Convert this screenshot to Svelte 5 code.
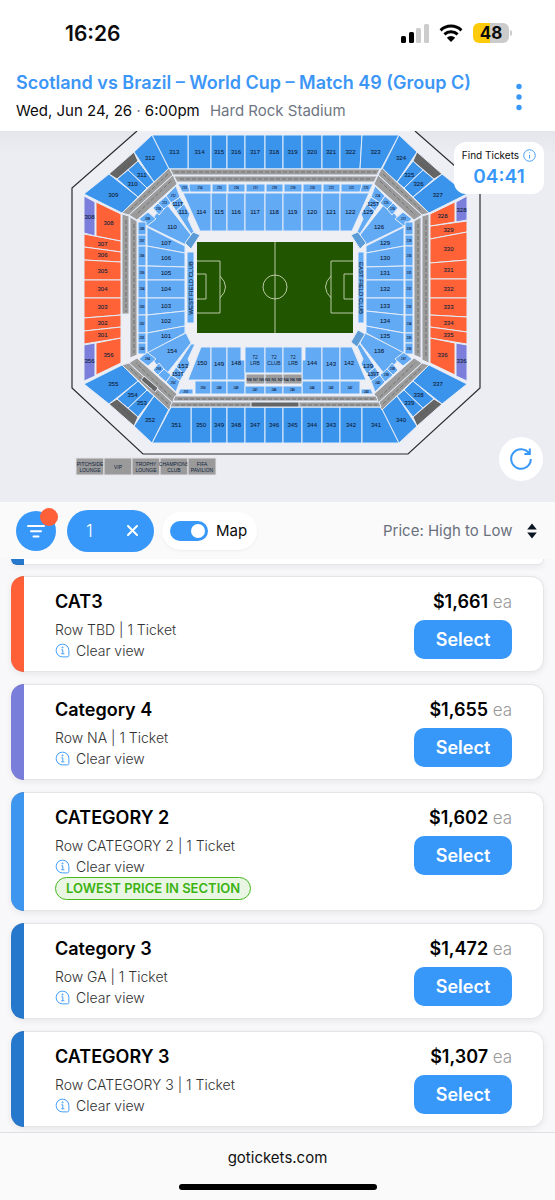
<script lang="ts">
	type Section = { label: string; pts: number[]; kind: string; size?: number; at?: number[] };

	let showMap = $state(true);
	let quantity = $state(1);

	const listings = [
		{ section: 'CAT3', row: 'TBD', price: '$1,661', tone: 'orange', lowest: false },
		{ section: 'Category 4', row: 'NA', price: '$1,655', tone: 'violet', lowest: false },
		{ section: 'CATEGORY 2', row: 'CATEGORY 2', price: '$1,602', tone: 'blue', lowest: true },
		{ section: 'Category 3', row: 'GA', price: '$1,472', tone: 'navy', lowest: false },
		{ section: 'CATEGORY 3', row: 'CATEGORY 3', price: '$1,307', tone: 'navy', lowest: false }
	];

	const sections: Section[] = [];

	function add(kind: string, label: string, pts: number[], size = 6, at?: number[]) {
		sections.push({ kind, label: String(label), pts, size, at });
	}

	// straight runs of sections along the two long sides
	const cols = [[188, 211], [211, 227], [227, 245], [245, 265], [265, 283], [283, 302], [302, 322], [322, 340], [340, 362]];
	cols.forEach(([a, b], i) => {
		add('upper', `${314 + i}`, [a, 135, b, 135, i === 8 ? 360 : b, 169, a, 169]);
		add('lower', `${214 + i}`, [a + 1, 184, b, 184, b, 192, a + 1, 192], 3);
		if (i > 0 && i < 8) add('lower', `${114 + i}`, [a, 193, b, 193, b, 231, a, 231]);
		add('upper', `${350 - i}`, [i === 0 ? 191 : a, 407, b, 407, b, 443, i === 0 ? 191 : a, 443]);
	});
	add('upper', '313', [152, 135, 188, 135, 188, 169, 169, 169]);
	add('upper', '323', [362, 135, 399, 135, 381, 169, 360, 169]);
	add('lower', '213', [178, 184, 188, 184, 190, 192, 182, 192], 3);
	add('lower', '223', [362, 184, 373, 184, 369, 192, 360, 192], 3);
	add('lower', '114', [183, 193, 211, 193, 211, 231, 200, 231]);
	add('lower', '122', [340, 193, 369, 193, 352, 231, 340, 231]);
	add('upper', '351', [171, 407, 191, 407, 191, 443, 152, 443]);
	add('upper', '341', [362, 407, 381, 407, 399, 443, 362, 443]);

	add('lower', '150', [201, 347, 211, 347, 211, 380, 188, 380], 6, [202, 363]);
	add('lower', '149', [211, 347, 227, 347, 227, 380, 211, 380]);
	add('lower', '148', [227, 347, 241, 347, 241, 360, 245, 360, 245, 380, 227, 380], 6, [236, 363]);
	add('lower', '144', [305, 347, 322, 347, 322, 380, 302, 380, 302, 360, 305, 360], 6, [312, 363]);
	add('lower', '143', [322, 347, 340, 347, 340, 380, 322, 380]);
	add('lower', '142', [340, 347, 352, 347, 366, 380, 340, 380], 6, [349, 363]);
	[[195, 211, 250], [211, 227, 249], [227, 245, 248], [302, 322, 244], [322, 340, 243], [340, 360, 242]].forEach(([a, b, n]) =>
		add('lower', `${n}`, [a, 381, b, 381, b, 394, a, 394], 3)
	);
	[[245, 265, 247], [265, 283, 246], [283, 302, 245]].forEach(([a, b, n]) => {
		add('lower', `${n}`, [a, 386, b, 386, b, 394, a, 394], 3);
		add('lower', '', [a, 347, b, 347, b, 373, a, 373]);
	});
	add('lower', '251', [180, 389, 193, 389, 193, 394, 178, 394], 3);
	add('lower', '241', [361, 389, 371, 389, 373, 394, 361, 394], 3);

	// the four corners share one shape
	const corners = [
		{ fx: false, fy: false, n: ['312', '311', '310', '309', '110', '111', '111T', '212', '211', '210', '209'] },
		{ fx: true, fy: false, n: ['324', '325', '326', '327', '126', '125', '125T', '224', '225', '226', '227'] },
		{ fx: false, fy: true, n: ['352', '353', '354', '355', '154', '153', '153T', '252', '', '253', '254'] },
		{ fx: true, fy: true, n: ['340', '339', '338', '337', '138', '139', '139T', '240', '239', '238', '237'] }
	];
	const cornerShapes: [string, number[], number][] = [
		['upper', [152, 135, 169, 169, 154, 182, 134, 152], 6],
		['upper', [128, 170, 138, 161, 154, 182, 147, 188], 6],
		['upper', [117, 179, 128, 170, 147, 188, 138, 197], 6],
		['upper', [109, 174, 138, 197, 122, 213, 84, 194], 6],
		['lower', [147, 226, 165, 202, 191, 235, 186, 245], 6],
		['lower', [176, 211, 184, 204, 190, 214, 188, 219, 195, 234, 191, 234], 6],
		['lower', [171, 203, 180, 197, 184, 204, 176, 211], 5],
		['lower', [166, 196, 176, 186, 180, 197, 171, 203], 3],
		['lower', [158, 203, 166, 196, 171, 203, 164, 209], 3],
		['lower', [153, 208, 158, 203, 164, 209, 159, 215], 3],
		['lower', [139, 219, 148, 212, 156, 219, 147, 226], 3],
		['club', [169, 168, 173, 175, 129, 215, 122, 213], 3],
		['club', [173, 175, 177, 184, 137, 220, 129, 215], 3],
		['dark', [134, 152, 138, 161, 117, 179, 109, 174], 3]
	];
	const cornerLabels: Record<number, number[]> = { 0: [150, 158], 4: [172, 227], 5: [183, 212] };
	corners.forEach((c) => {
		const flip = (pts: number[]) => pts.map((v, k) => (k % 2 === 0 ? (c.fx ? 551 - v : v) : c.fy ? 578 - v : v));
		cornerShapes.forEach(([kind, pts, size], i) =>
			add(kind, c.n[i] ?? '', flip(pts), size, cornerLabels[i] && flip(cornerLabels[i]))
		);
	});

	// end stands: [label, outer top, inner top, outer bottom, inner bottom]
	type Wedge = [string, number, number, number, number];
	function stand(kind: string, x1: number, x2: number, rows: Wedge[], size = 6) {
		rows.forEach(([n, a, b, c, d]) => add(kind, n, [x1, a, x2, b, x2, d, x1, c], size));
	}
	stand('orange', 84, 121, [
		['307', 234, 241, 247, 252], ['306', 247, 252, 260, 262], ['305', 260, 262, 280, 280], ['304', 280, 280, 298, 298],
		['303', 298, 298, 318, 315], ['302', 318, 315, 331, 327], ['301', 331, 327, 344, 338]
	]);
	stand('orange', 467, 430, [
		['329', 221, 226, 232, 239], ['330', 232, 239, 260, 263], ['331', 260, 263, 279, 279], ['332', 279, 279, 298, 298],
		['333', 298, 298, 317, 315], ['334', 317, 315, 332, 327], ['335', 332, 327, 344, 338]
	]);
	stand('orange', 96, 121, [['308', 202, 214, 236, 241], ['356', 343, 338, 375, 363]]);
	stand('orange', 455, 430, [['328', 202, 214, 222, 226], ['336', 343, 338, 375, 363]]);
	stand('violet', 84, 95, [['308', 196, 202, 233, 236], ['356', 345, 343, 381, 376]]);
	stand('violet', 467, 456, [['328', 196, 202, 220, 222], ['336', 345, 343, 381, 376]]);
	const lowerRows = [[227, 246, 246, 253], [246, 253, 266, 267], [266, 267, 280, 280], [280, 280, 298, 298], [298, 298, 315, 311], [315, 311, 333, 326], [333, 326, 353, 333]];
	lowerRows.forEach(([a, b, c, d], i) => {
		stand('lower', 147, 185, [[`${107 - i}`, a, b, c, d]]);
		stand('lower', 404, 366, [[`${129 + i}`, a, b, c, d]]);
	});
	const clubRows = [222, 235, 246, 266, 280, 298, 315, 333, 343, 354];
	clubRows.slice(0, -1).forEach((y, i) => {
		const end = clubRows[i + 1];
		add('lower', `${208 - i}`, [138, y, 146, y, 146, end, 138, end], 3);
		add('lower', `${228 + i}`, [405, y, 413, y, 413, end, 405, end], 3);
	});

	// club seating bands
	add('club', '', [170, 169, 380, 169, 377, 175, 173, 175]);
	add('club', '', [174, 176, 377, 176, 374, 182, 177, 182]);
	add('club', '', [175, 396, 376, 396, 378, 401, 173, 401]);
	add('club', '', [172, 402, 379, 402, 381, 407, 170, 407]);
	add('dark', '', [251, 402, 299, 402, 299, 407, 251, 407]);
	add('club', '', [122, 214, 129, 216, 129, 314, 122, 314]);
	add('club', '', [130, 217, 137, 221, 137, 355, 130, 358]);
	add('club', '', [414, 221, 421, 217, 421, 358, 414, 355]);
	add('club', '', [422, 216, 429, 214, 429, 363, 422, 360]);
	add('dark', '', [144, 376, 158, 388, 155, 392, 141, 380]);
	add('club', 'N9 N7 N5', [246, 374, 265, 374, 265, 384, 246, 384], 4);
	add('club', 'N3 N1 N2', [265, 374, 283, 374, 283, 384, 265, 384], 4);
	add('club', 'N4 N6 N8', [283, 374, 302, 374, 302, 384, 283, 384], 4);
	add('lounge', '', [193, 232, 200, 235, 191, 249, 185, 243]);
	add('lounge', '', [358, 232, 351, 235, 360, 249, 366, 243]);
	add('lounge', '', [358, 330, 365, 334, 357, 347, 351, 342]);
	add('lower', '', [187, 252, 194, 252, 194, 323, 187, 323]);
	add('lower', '', [358, 252, 364, 252, 364, 323, 358, 323]);

	const bandTicks = [
		'M175 172H376', 'M180 179H372', 'M178 399H374', 'M175 405H249', 'M302 405H377',
		'M126 220V312', 'M134 224V353', 'M418 224V353', 'M426 220V358',
		'M168 174L130 210', 'M171 181L136 215', 'M383 174L421 210', 'M380 181L415 215',
		'M168 404L130 368', 'M171 397L136 363', 'M383 404L421 368', 'M380 397L415 363',
		'M118 173L131 162', 'M118 405L131 416', 'M433 173L420 162', 'M433 405L420 416'
	];

	const suites = [
		['PITCHSIDE', 'LOUNGE'], ['VIP'], ['TROPHY', 'LOUNGE'], ['CHAMPIONS', 'CLUB'], ['FIFA', 'PAVILION']
	];

	function center(s: Section) {
		if (s.at) return s.at;
		const n = s.pts.length / 2;
		let x = 0, y = 0;
		s.pts.forEach((v, i) => (i % 2 ? (y += v) : (x += v)));
		return [x / n, y / n];
	}
</script>

{#snippet info()}
	<svg class="info" viewBox="0 0 16 16" aria-hidden="true">
		<path d="M8 1.2a6.8 6.8 0 1 0 0 13.6h5.2c1 0 1.6-.6 1.6-1.6V8A6.8 6.8 0 0 0 8 1.2Z" />
		<path d="M6.8 7.2h1.5v4.2M6.6 11.5h3.4" /><circle cx="8" cy="4.7" r=".6" />
	</svg>
{/snippet}

<div class="page">
	<div class="status">
		<span class="clock">16:26</span>
		<div class="signals">
			<svg width="28" height="20" viewBox="0 0 28 20">
				<rect x="0" y="13" width="5" height="7" rx="1.5" />
				<rect x="8" y="9" width="5" height="11" rx="1.5" />
				<rect class="weak" x="15" y="5" width="5" height="15" rx="1.5" />
				<rect class="weak" x="23" y="1" width="5" height="19" rx="1.5" />
			</svg>
			<svg width="24" height="20" viewBox="0 0 24 20">
				<path class="arc" d="M1.6 7.3a15 15 0 0 1 20.8 0M5.4 11.3a9.6 9.6 0 0 1 13.2 0" />
				<path d="M12 19l-4.2-4.2a6 6 0 0 1 8.4 0Z" />
			</svg>
			<div class="battery"><span>48</span></div>
		</div>
	</div>

	<header>
		<div>
			<h1>Scotland vs Brazil – World Cup – Match 49 (Group C)</h1>
			<p>Wed, Jun 24, 26 <i>·</i> 6:00pm <span>Hard Rock Stadium</span></p>
		</div>
		<button class="more" aria-label="More">
			<svg width="6" height="28" viewBox="0 0 6 28"><circle cx="3" cy="3.5" r="2.7" /><circle cx="3" cy="14" r="2.7" /><circle cx="3" cy="24.5" r="2.7" /></svg>
		</button>
	</header>

	<section class="map">
		<svg class="stadium" viewBox="0 131 555 371">
			<path class="outline" d="M137 131L72 188V388L143 454H408L480 388V188L415 131" />
			{#each sections as s}
				<polygon class={s.kind} points={s.pts.join(' ')} />
			{/each}
			{#each bandTicks as d}
				<path class="ticks" {d} />
			{/each}
			{#each sections as s}
				{#if s.label}
					<text x={center(s)[0]} y={center(s)[1]} font-size={s.size}>{s.label}</text>
				{/if}
			{/each}
			{#each ['LRB', 'CLUB', 'LRB'] as name, i}
				<text class="thin" x={255 + i * 19} y="357" font-size="5">72</text>
				<text class="thin" x={255 + i * 19} y="363" font-size="5">{name}</text>
			{/each}
			<text font-size="6" transform="translate(190.5 288) rotate(-90)">WEST FIELD CLUB</text>
			<text font-size="6" transform="translate(361 288) rotate(90)">EAST FIELD CLUB</text>
			<rect class="grass" x="197" y="242" width="156" height="91" />
			<path class="lines" d="M275 242V333M197 261H220V313H197M197 274H206V299H197M353 261H331V313H353M353 274H344V299H353M220 276Q231 287 220 298M331 276Q320 287 331 298" />
			<circle class="lines" cx="275" cy="287" r="12" />
			{#each suites as lines, i}
				<rect class="suite" x={76 + i * 28} y="458" width="28" height="17" />
				{#each lines as line, k}
					<text class="thin" x={90 + i * 28} y={lines.length === 1 ? 467 : 464 + k * 6} font-size="5">{line}</text>
				{/each}
			{/each}
		</svg>
		<div class="timer">
			<div>Find Tickets
				<svg viewBox="0 0 14 14" width="13" height="13"><circle cx="7" cy="7" r="6.2" /><path d="M7 6.3v4M7 3.7v1" /></svg>
			</div>
			<strong>04:41</strong>
		</div>
		<button class="reset" aria-label="Reset map">
			<svg width="24" height="24" viewBox="0 0 24 24"><path d="M20.2 6.6A9.8 9.8 0 1 0 21.8 12M20.8 1.6v5.4h-5.4" /></svg>
		</button>
	</section>

	<div class="toolbar">
		<button class="filter" aria-label="Filters">
			<svg width="20" height="14" viewBox="0 0 20 14"><path d="M2 2h16M5 7.2h10M7.5 12.4h5" /></svg>
			<span class="dot"></span>
		</button>
		<button class="chip">
			{quantity}
			<svg width="11" height="11" viewBox="0 0 11 11"><path d="M1 1l9 9M10 1l-9 9" /></svg>
		</button>
		<label class="switch"><input type="checkbox" bind:checked={showMap} />Map</label>
		<div class="sort">
			<select aria-label="Sort"><option>Price: High to Low</option></select>
			<svg width="10" height="16" viewBox="0 0 10 16"><path d="M5 .5l4.8 6H.2ZM5 15.5l4.8-6H.2Z" /></svg>
		</div>
	</div>

	<main>
		<div class="card peek navy"></div>
		{#each listings as item}
			<article class="card {item.tone}">
				<div class="details">
					<h2>{item.section}</h2>
					<p>Row {item.row} | 1 Ticket</p>
					<p class="view">{@render info()}Clear view</p>
					{#if item.lowest}
						<span class="badge">LOWEST PRICE IN SECTION</span>
					{/if}
				</div>
				<div class="buy">
					<div class="price">{item.price} <small>ea</small></div>
					<button>Select</button>
				</div>
			</article>
		{/each}
	</main>

	<footer>
		<a href="#top">gotickets.com</a>
		<div class="home"></div>
	</footer>
</div>

<style>
	:global(body) {
		margin: 0;
		background: #fafafb;
	}

	.page {
		display: flex;
		flex-direction: column;
		min-height: 100vh;
		font-family: Inter, 'Liberation Sans', sans-serif;
		color: #0b0b0d;
	}
	h1, h2, p {
		margin: 0;
	}
	button {
		border: 0;
		padding: 0;
		font-family: inherit;
		cursor: pointer;
	}
	svg {
		flex: none;
	}

	.status {
		display: flex;
		justify-content: space-between;
		align-items: center;
		height: 66px;
		padding: 0 46px 0 65px;
		box-sizing: border-box;
		background: #fff;
	}
	.clock {
		font-size: 21px;
		font-weight: 600;
	}
	.signals {
		display: flex;
		align-items: center;
		gap: 10px;
	}
	.weak {
		fill: #ccc;
	}
	.arc {
		fill: none;
		stroke: #000;
		stroke-width: 3;
	}
	.battery {
		position: relative;
		width: 36px;
		height: 20px;
		border-radius: 6px;
		background: linear-gradient(90deg, #fecb0b 48%, #cbcbcb 48%);
		font-size: 17px;
		line-height: 20px;
		font-weight: 700;
		text-align: center;
	}
	.battery::after {
		content: '';
		position: absolute;
		left: 37px;
		top: 7px;
		width: 2px;
		height: 6px;
		border-radius: 0 2px 2px 0;
		background: #ccc;
	}

	header {
		display: flex;
		justify-content: space-between;
		align-items: center;
		height: 65px;
		box-sizing: border-box;
		padding: 0 33px 4px 16px;
		background: #fff;
		white-space: nowrap;
	}
	h1 {
		font-size: 18px;
		line-height: 28px;
		font-weight: 600;
		color: #3c96f6;
	}
	header p {
		font-size: 15px;
		line-height: 28px;
	}
	header i, header span {
		color: #6f7683;
	}
	header span {
		margin-left: 6px;
	}
	.more {
		display: flex;
		background: none;
	}
	.more svg {
		fill: #3898fa;
	}

	.map {
		position: relative;
		background: linear-gradient(#e4e6eb, #ecedf2 24px);
	}
	.stadium {
		display: block;
		width: 100%;
	}
	.outline {
		fill: #eeeff5;
		stroke: #2b2b2e;
		stroke-width: 1.2;
	}
	polygon {
		stroke: #e4ecf8;
		stroke-width: 1;
	}
	.upper { fill: #3b94ec; }
	.lower { fill: #63aaf5; }
	polygon.orange { fill: #ff6237; }
	polygon.violet { fill: #7c7edb; }
	.club { fill: #9c9c9c; }
	.dark { fill: #656565; }
	.lounge { fill: #5b9bd6; }
	.ticks {
		fill: none;
		stroke: #555;
		stroke-width: 1;
		stroke-dasharray: 4 2;
		opacity: 0.6;
	}
	.stadium text {
		font-family: 'Liberation Sans', sans-serif;
		text-anchor: middle;
		dominant-baseline: central;
		fill: #10233b;
		stroke: #10233b;
		stroke-width: 0.1;
	}
	.stadium .thin {
		stroke: none;
	}
	.grass { fill: #225500; }
	.lines {
		fill: none;
		stroke: #b9c9a6;
		stroke-width: 1;
	}
	.suite {
		fill: #9a9a9a;
		stroke: #e4e4e8;
	}
	.timer {
		position: absolute;
		top: 11px;
		right: 11px;
		width: 90px;
		height: 52px;
		box-sizing: border-box;
		padding-top: 5px;
		border-radius: 12px;
		background: #fff;
		text-align: center;
		font-size: 10px;
		line-height: 16px;
	}
	.timer div {
		display: flex;
		justify-content: center;
		align-items: center;
		gap: 4px;
	}
	.timer svg {
		fill: none;
		stroke: #3898fa;
	}
	.timer strong {
		display: block;
		font-size: 19px;
		line-height: 27px;
		font-weight: 600;
		color: #3898fa;
	}
	.reset {
		position: absolute;
		right: 12px;
		bottom: 21px;
		display: grid;
		place-items: center;
		width: 44px;
		height: 44px;
		border-radius: 50%;
		background: #fff;
	}
	.reset svg {
		fill: none;
		stroke: #3898fa;
		stroke-width: 2;
	}

	.toolbar {
		display: flex;
		align-items: center;
		height: 57px;
		padding: 0 18px 0 16px;
		background: #fafafb;
	}
	.filter {
		position: relative;
		display: grid;
		place-items: center;
		width: 40px;
		height: 40px;
		border-radius: 50%;
		background: #3898fa;
	}
	.filter svg, .chip svg {
		fill: none;
		stroke: #fff;
		stroke-width: 2;
		stroke-linecap: round;
	}
	.dot {
		position: absolute;
		top: -3px;
		right: -2px;
		width: 18px;
		height: 18px;
		border-radius: 50%;
		background: #ff6038;
	}
	.chip {
		display: flex;
		align-items: center;
		justify-content: space-between;
		width: 87px;
		height: 42px;
		margin-left: 11px;
		padding: 0 16px 0 19px;
		border-radius: 21px;
		background: #3898fa;
		color: #fff;
		font-size: 17px;
		font-weight: 300;
	}
	.switch {
		display: flex;
		align-items: center;
		gap: 8px;
		height: 38px;
		margin-left: 8px;
		padding: 0 10px 0 8px;
		border-radius: 19px;
		background: #fff;
		box-shadow: 0 1px 3px rgba(0, 0, 0, 0.05);
		font-size: 15px;
	}
	.switch input {
		appearance: none;
		display: flex;
		justify-content: flex-start;
		width: 38px;
		height: 20px;
		margin: 0;
		padding: 3px;
		box-sizing: border-box;
		border-radius: 10px;
		background: #b9bec7;
	}
	.switch input::before {
		content: '';
		width: 14px;
		height: 14px;
		border-radius: 50%;
		background: #fff;
	}
	.switch input:checked {
		justify-content: flex-end;
		background: #3898fa;
	}
	.sort {
		display: flex;
		align-items: center;
		gap: 14px;
		margin-left: auto;
	}
	.sort select {
		appearance: none;
		border: 0;
		padding: 0;
		background: none;
		font: 400 15px Inter, 'Liberation Sans', sans-serif;
		color: #6a717d;
	}
	.sort svg {
		fill: #0c1522;
	}

	main {
		display: flex;
		flex-direction: column;
		flex: 1;
		gap: 12px;
		padding: 0 11px 5px;
		overflow: hidden;
		background: #f8f8fa;
	}
	.card {
		display: flex;
		justify-content: space-between;
		box-sizing: border-box;
		padding: 13px 31px 10px 44px;
		border: 1px solid rgba(60, 60, 80, 0.13);
		border-left: 0;
		border-radius: 13px;
		background: linear-gradient(90deg, var(--tone) 13px, #fff 13px) border-box;
		box-shadow: 0 2px 6px rgba(40, 40, 70, 0.08);
	}
	.card.peek {
		height: 6px;
		padding: 0;
		margin-bottom: -1px;
		border-top: 0;
		border-radius: 0 0 13px 13px;
	}
	.card.orange { --tone: #ff6038; }
	.card.violet { --tone: #7a7edb; }
	.card.blue { --tone: #3f96ee; }
	.card.navy { --tone: #2678cc; }
	h2, .price {
		font-size: 18px;
		line-height: 24px;
		font-weight: 600;
		color: #000;
	}
	.details p {
		font-size: 14px;
		line-height: 21px;
		font-weight: 300;
		color: #333;
	}
	.details h2 {
		margin-bottom: 5px;
	}
	.details .view {
		display: flex;
		align-items: center;
		gap: 6px;
	}
	.info {
		width: 15px;
		height: 15px;
		fill: none;
		stroke: #3898fa;
		stroke-width: 1;
	}
	.badge {
		display: block;
		box-sizing: border-box;
		height: 23px;
		padding: 0 10px;
		border: 1px solid #44b81c;
		border-radius: 12px;
		background: #e9f6e4;
		font-size: 13px;
		line-height: 21px;
		font-weight: 600;
		color: #3cb313;
	}
	.buy {
		display: flex;
		flex-direction: column;
		align-items: flex-end;
		gap: 6px;
	}
	.price small {
		font-size: 17px;
		font-weight: 300;
		color: #999;
	}
	.buy button {
		width: 98px;
		height: 39px;
		border-radius: 10px;
		background: #3898fa;
		color: #fff;
		font-size: 18px;
		font-weight: 600;
	}

	footer {
		display: flex;
		flex-direction: column;
		align-items: center;
		justify-content: space-between;
		height: 68px;
		box-sizing: border-box;
		padding: 14px 0 10px;
		border-top: 1px solid #dedfe3;
		background: #fafafb;
	}
	footer a {
		font-size: 15px;
		line-height: 22px;
		color: #111;
		text-decoration: none;
	}
	.home {
		width: 198px;
		height: 6px;
		border-radius: 3px;
		background: #000;
	}
</style>
